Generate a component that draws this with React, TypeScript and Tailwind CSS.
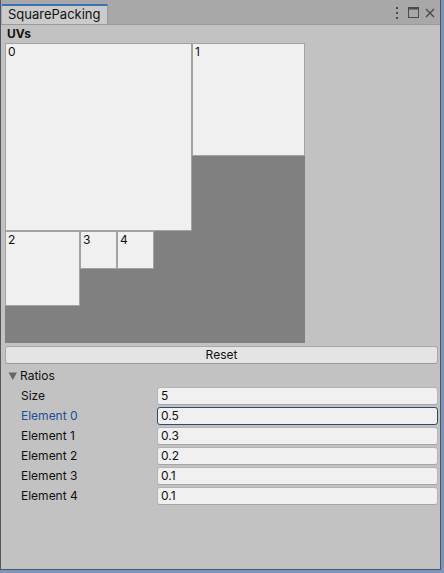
import React from 'react';

const font = { fontFamily: 'Inter, "Liberation Sans", sans-serif' };

const rows = [
  { label: 'Size', value: '5' },
  { label: 'Element 0', value: '0.5', focused: true },
  { label: 'Element 1', value: '0.3' },
  { label: 'Element 2', value: '0.2' },
  { label: 'Element 3', value: '0.1' },
  { label: 'Element 4', value: '0.1' },
];

const Square: React.FC<{ label: string; className: string }> = ({ label, className }) => (
  <div className={`border border-[#a3a3a3] bg-[#f0f0f0] text-[12px] leading-none text-[#111] pl-[2px] pt-[2px] ${className}`}>
    {label}
  </div>
);

export default function App() {
  return (
    <div className="w-[444px] h-[573px] bg-[#7b95bd] flex flex-col" style={font}>
      <div className="w-[441px] h-[570px] flex flex-col bg-[#c2c2c2] border-l border-r border-b border-[#4e5766]">
        {/* Tab bar */}
        <div className="h-[25px] bg-[#a8a8a8] flex items-end justify-between border-b border-[#9a9a9a]">
          <div className="h-[20px] ml-[1px] w-[106px] bg-[#cbcbcb] border-t-2 border-[#3a72b0] border-r border-r-[#9a9a9a] flex items-center pl-[6px] text-[13px] text-[#111]">
            SquarePacking
          </div>
          <div className="flex items-center gap-[6px] h-[23px] pr-[5px]">
            <svg width="4" height="12" viewBox="0 0 4 12">
              <rect x="1" y="0" width="2" height="2" fill="#4a4a4a" />
              <rect x="1" y="5" width="2" height="2" fill="#4a4a4a" />
              <rect x="1" y="10" width="2" height="2" fill="#4a4a4a" />
            </svg>
            <svg width="11" height="11" viewBox="0 0 11 11" className="ml-[3px]">
              <rect x="0.5" y="0.5" width="10" height="10" fill="none" stroke="#4a4a4a" />
              <rect x="0.5" y="0.5" width="10" height="2" fill="#4a4a4a" />
            </svg>
            <svg width="10" height="10" viewBox="0 0 10 10">
              <path d="M1 1 L9 9 M9 1 L1 9" stroke="#4a4a4a" strokeWidth="1.4" />
            </svg>
          </div>
        </div>

        <div className="pl-[4px] pr-[2px] flex flex-col">
          <div className="text-[12px] font-bold leading-[18px] text-[#111] pl-[2px]">UVs</div>

          {/* Packing canvas */}
          <div className="w-[300px] h-[300px] bg-[#808080] flex">
            <div className="flex flex-col">
              <Square label="0" className="w-[187px] h-[188px]" />
              <div className="flex items-start">
                <Square label="2" className="w-[75px] h-[75px]" />
                <Square label="3" className="w-[37px] h-[38px]" />
                <Square label="4" className="w-[37px] h-[38px]" />
              </div>
            </div>
            <Square label="1" className="w-[113px] h-[113px]" />
          </div>

          {/* Reset */}
          <button className="mt-[3px] h-[18px] rounded-[3px] bg-[#e4e4e4] border border-[#a8a8a8] border-b-[#999] text-[12px] text-[#111] leading-none">
            Reset
          </button>

          {/* Ratios */}
          <div className="flex items-center h-[20px] mt-[2px] text-[12px] text-[#111]">
            <svg width="10" height="10" viewBox="0 0 10 10" className="ml-[3px] mr-[2px]">
              <path d="M0.5 1.5 L9 1.5 L4.75 9 Z" fill="#666" />
            </svg>
            Ratios
          </div>
          <div className="flex flex-col">
            {rows.map((r) => (
              <div key={r.label} className="flex items-center h-[20px]">
                <div className={`w-[152px] pl-[16px] text-[12px] ${r.focused ? 'text-[#1b4f96]' : 'text-[#111]'}`}>
                  {r.label}
                </div>
                <div
                  className={`flex-1 h-[18px] rounded-[3px] bg-[#f0f0f0] flex items-center pl-[3px] text-[12px] text-[#111] border ${
                    r.focused ? 'border-[#2d4a72]' : 'border-[#b5b5b5] border-b-[#a5a5a5]'
                  }`}
                >
                  {r.value}
                </div>
              </div>
            ))}
          </div>
        </div>
      </div>
    </div>
  );
}
